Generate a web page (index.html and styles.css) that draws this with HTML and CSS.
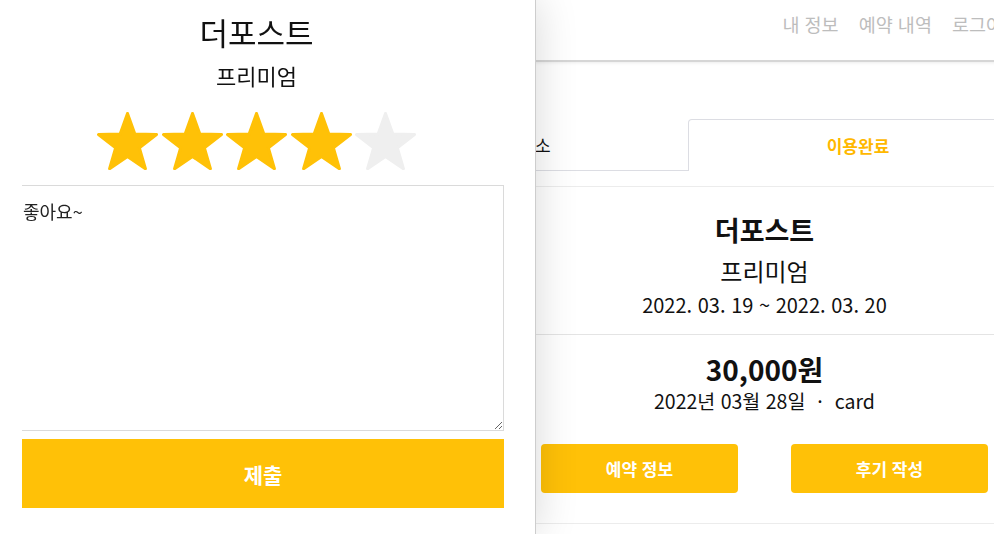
FILE: index.html
```html
<!DOCTYPE html>
<html lang="ko">
<head>
<meta charset="utf-8">
<title>예약 내역</title>
<link rel="stylesheet" href="styles.css">
</head>
<body>
<div class="page">
  <header class="header">
    <nav class="nav">
      <a class="nav-link">내 정보</a>
      <a class="nav-link">예약 내역</a>
      <a class="nav-link">로그아웃</a>
    </nav>
  </header>
  <main class="main">
    <div class="tabs">
      <div class="tab">취소</div>
      <div class="tab active">이용완료</div>
    </div>
    <section class="card">
      <div class="card-info">
        <h2 class="hotel">더포스트</h2>
        <p class="room">프리미엄</p>
        <p class="dates">2022. 03. 19 ~ 2022. 03. 20</p>
      </div>
      <div class="card-pay">
        <p class="price">30,000원</p>
        <p class="paid">2022년 03월 28일<span class="dot">·</span>card</p>
        <div class="actions">
          <button class="action">예약 정보</button>
          <button class="action">후기 작성</button>
        </div>
      </div>
    </section>
  </main>
</div>

<div class="modal">
  <h1 class="m-title">더포스트</h1>
  <p class="m-room">프리미엄</p>
  <div class="stars">
    <svg class="star on" viewBox="0 0 61 58" width="61" height="58"><polygon points="30.5,1.5 37.85,21.89 59.51,22.58 42.39,35.86 48.43,56.67 30.5,44.5 12.57,56.67 18.61,35.86 1.49,22.58 23.15,21.89"/></svg>
    <svg class="star on" viewBox="0 0 61 58" width="61" height="58"><polygon points="30.5,1.5 37.85,21.89 59.51,22.58 42.39,35.86 48.43,56.67 30.5,44.5 12.57,56.67 18.61,35.86 1.49,22.58 23.15,21.89"/></svg>
    <svg class="star on" viewBox="0 0 61 58" width="61" height="58"><polygon points="30.5,1.5 37.85,21.89 59.51,22.58 42.39,35.86 48.43,56.67 30.5,44.5 12.57,56.67 18.61,35.86 1.49,22.58 23.15,21.89"/></svg>
    <svg class="star on" viewBox="0 0 61 58" width="61" height="58"><polygon points="30.5,1.5 37.85,21.89 59.51,22.58 42.39,35.86 48.43,56.67 30.5,44.5 12.57,56.67 18.61,35.86 1.49,22.58 23.15,21.89"/></svg>
    <svg class="star off" viewBox="0 0 61 58" width="61" height="58"><polygon points="30.5,1.5 37.85,21.89 59.51,22.58 42.39,35.86 48.43,56.67 30.5,44.5 12.57,56.67 18.61,35.86 1.49,22.58 23.15,21.89"/></svg>
  </div>
  <textarea class="review">좋아요~</textarea>
  <button class="submit">제출</button>
</div>
</body>
</html>
```

FILE: styles.css
```css
html, body {
  margin: 0;
  height: 100%;
  overflow: hidden;
  background: #fff;
  font-family: "Noto Sans CJK KR", "Noto Sans", sans-serif;
  color: #111;
}

.page {
  width: 1030px;
}

/* header */
.header {
  height: 48px;
  border-bottom: 2px solid #d6d6d6;
  box-shadow: 0 1px 3px rgba(0, 0, 0, 0.08);
  display: flex;
  justify-content: flex-end;
  align-items: center;
  padding: 0 10px 12px 0;
}

.nav {
  display: flex;
  gap: 20px;
}

.nav-link {
  font-size: 18.5px;
  color: #bdbdbd;
  white-space: nowrap;
}

/* main */
.main {
  margin-left: 535px;
  width: 459px;
}

.tabs {
  display: flex;
  margin: 57px 0 0 -153px;
  width: 646px;
}

.tab {
  height: 52px;
  box-sizing: border-box;
  display: flex;
  align-items: center;
  justify-content: center;
  font-size: 17px;
  color: #111;
  width: 306px;
  border-bottom: 1px solid #dcdde3;
}

.tab.active {
  width: 340px;
  border: 1px solid #dcdde3;
  border-bottom: none;
  border-radius: 4px 4px 0 0;
  color: #ffb800;
  font-weight: 700;
}

.card {
  margin-top: 15px;
  border-top: 1px solid #ececec;
  border-bottom: 1px solid #ececec;
  text-align: center;
}

.card-info {
  padding: 26px 0 15px;
  border-bottom: 1px solid #e4e4e4;
}

.hotel {
  margin: 0;
  font-size: 27px;
  line-height: 34px;
  font-weight: 700;
}

.room {
  margin: 7px 0 0;
  font-size: 24px;
  line-height: 34px;
}

.dates {
  margin: 3px 0 0;
  font-size: 20px;
  line-height: 28px;
}

.card-pay {
  padding: 16px 0 30px;
}

.price {
  margin: 0;
  font-size: 28px;
  line-height: 36px;
  font-weight: 700;
}

.paid {
  margin: 0;
  font-size: 19.5px;
  line-height: 28px;
}

.dot {
  margin: 0 12px;
}

.actions {
  display: flex;
  justify-content: space-between;
  padding: 0 6px;
  margin-top: 29px;
}

.action {
  width: 197px;
  height: 49px;
  border: none;
  border-radius: 4px;
  background: #ffc107;
  color: #fff;
  font-family: inherit;
  font-size: 17px;
  font-weight: 700;
}

/* modal */
.modal {
  position: fixed;
  top: 0;
  left: 0;
  width: 536px;
  height: 100%;
  box-sizing: border-box;
  background: #fff;
  border-right: 1px solid #cdcdcd;
  box-shadow: 0 0 40px rgba(0, 0, 0, 0.16);
  display: flex;
  flex-direction: column;
  align-items: center;
  padding: 12px 22px 0 0;
}

.m-title {
  margin: 0;
  font-size: 31px;
  line-height: 40px;
  font-weight: 400;
}

.m-room {
  margin: 8px 0 0;
  font-size: 22px;
  line-height: 30px;
}

.stars {
  display: flex;
  gap: 3.5px;
  margin-top: 22px;
}

.star polygon {
  stroke-width: 3;
  stroke-linejoin: round;
}

.star.on polygon {
  fill: #ffc107;
  stroke: #ffc107;
}

.star.off polygon {
  fill: #efefef;
  stroke: #efefef;
}

.review {
  align-self: flex-start;
  margin: 15px 0 0 22px;
  width: 482px;
  height: 246px;
  box-sizing: border-box;
  border: 1px solid #dadada;
  border-left: none;
  padding: 12px 10px 10px 1px;
  font-family: inherit;
  font-size: 18px;
  line-height: 1.5;
  color: #222;
  outline: none;
}

.submit {
  align-self: flex-start;
  margin: 8px 0 0 22px;
  width: 482px;
  height: 69px;
  border: none;
  background: #ffc107;
  color: #fff;
  font-family: inherit;
  font-size: 21px;
  font-weight: 700;
}
```
